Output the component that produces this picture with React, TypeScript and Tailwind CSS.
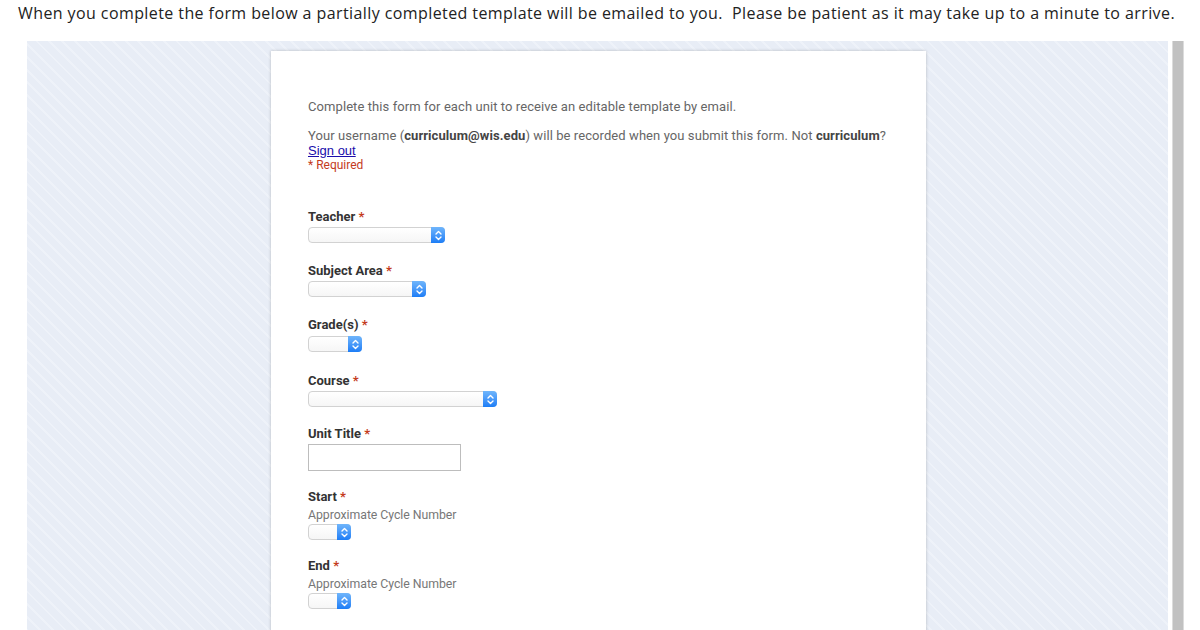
const Req = () => <span className="text-[#c43b1d]"> *</span>;

const Select = ({ w }: { w: string }) => (
  <div
    className={`${w} h-[16px] flex rounded-[4px] border border-[#d2d2d2] bg-gradient-to-b from-white to-[#f6f6f6]`}
  >
    <div className="flex-1" />
    <div className="w-[14px] -my-px -mr-px flex items-center justify-center rounded-r-[4px] bg-gradient-to-b from-[#6fb5fb] to-[#1b7df6]">
      <svg width="7" height="11" viewBox="0 0 7 11" fill="none" stroke="white" strokeWidth="1.4" strokeLinecap="round" strokeLinejoin="round">
        <path d="M1 4 L3.5 1.5 L6 4" />
        <path d="M1 7 L3.5 9.5 L6 7" />
      </svg>
    </div>
  </div>
);

const Label = ({ text }: { text: string }) => (
  <div className="text-[13px] leading-[15px] font-bold text-[#333]">
    {text}
    <Req />
  </div>
);

const Help = () => (
  <div className="text-[12.3px] leading-[15px] tracking-[-0.05px] text-[#777] mt-[4px] mb-[1px]">Approximate Cycle Number</div>
);

export default function App() {
  return (
    <div className="w-[1200px] h-[630px] overflow-hidden bg-white">
      <p className="pl-[18px] mt-px text-[16px] leading-[24px] tracking-[0.41px] text-[#222] whitespace-pre font-['Open_Sans',sans-serif]">
        When you complete the form below a partially completed template will be emailed to you.  Please be patient as it may take up to a minute to arrive.
      </p>

      <div className="mt-[16px] flex">
        <div className="ml-[27px] w-[1141px] h-[600px] pt-[10px] pl-[244px] flex bg-[#e8edf6] bg-[repeating-linear-gradient(45deg,#e8edf6_0px,#e8edf6_7px,#eef2f9_7px,#eef2f9_9px)]">
          <div className="w-[655px] h-[600px] bg-white shadow-[0_0_3px_rgba(0,0,0,0.22)] pl-[37px] pt-[48px] font-['Roboto',sans-serif]">
            <div className="text-[13px] leading-[15px] tracking-[0.08px] text-[#666]">
              Complete this form for each unit to receive an editable template by email.
            </div>
            <div className="mt-[14px] text-[13px] leading-[15px] tracking-[0.08px] text-[#666]">
              Your username (<b className="text-[#444]">curriculum@wis.edu</b>) will be recorded when you submit this form. Not{' '}
              <b className="text-[#444]">curriculum</b>?
            </div>
            <a href="#" className="block w-fit text-[13px] leading-[15px] text-[#1a0dab] underline font-['Liberation_Sans',sans-serif]">
              Sign out
            </a>
            <div className="text-[12px] leading-[14px] text-[#c43b1d]">* Required</div>

            <div className="mt-[37px]">
              <Label text="Teacher" />
              <div className="mt-[3px]"><Select w="w-[137px]" /></div>
            </div>
            <div className="mt-[20px]">
              <Label text="Subject Area" />
              <div className="mt-[3px]"><Select w="w-[118px]" /></div>
            </div>
            <div className="mt-[20px]">
              <Label text="Grade(s)" />
              <div className="mt-[4px]"><Select w="w-[54px]" /></div>
            </div>
            <div className="mt-[21px]">
              <Label text="Course" />
              <div className="mt-[3px]"><Select w="w-[189px]" /></div>
            </div>
            <div className="mt-[19px]">
              <Label text="Unit Title" />
              <input className="mt-[3px] block w-[153px] h-[27px] border border-[#bdbdbd] bg-white outline-none" />
            </div>
            <div className="mt-[18px]">
              <Label text="Start" />
              <Help />
              <Select w="w-[43px]" />
            </div>
            <div className="mt-[18px]">
              <Label text="End" />
              <Help />
              <Select w="w-[43px]" />
            </div>
          </div>
        </div>
        <div className="ml-[4px] w-[12px] h-[600px] border-x border-[#dcdcdc] bg-[#c1c1c1]" />
      </div>
    </div>
  );
}
